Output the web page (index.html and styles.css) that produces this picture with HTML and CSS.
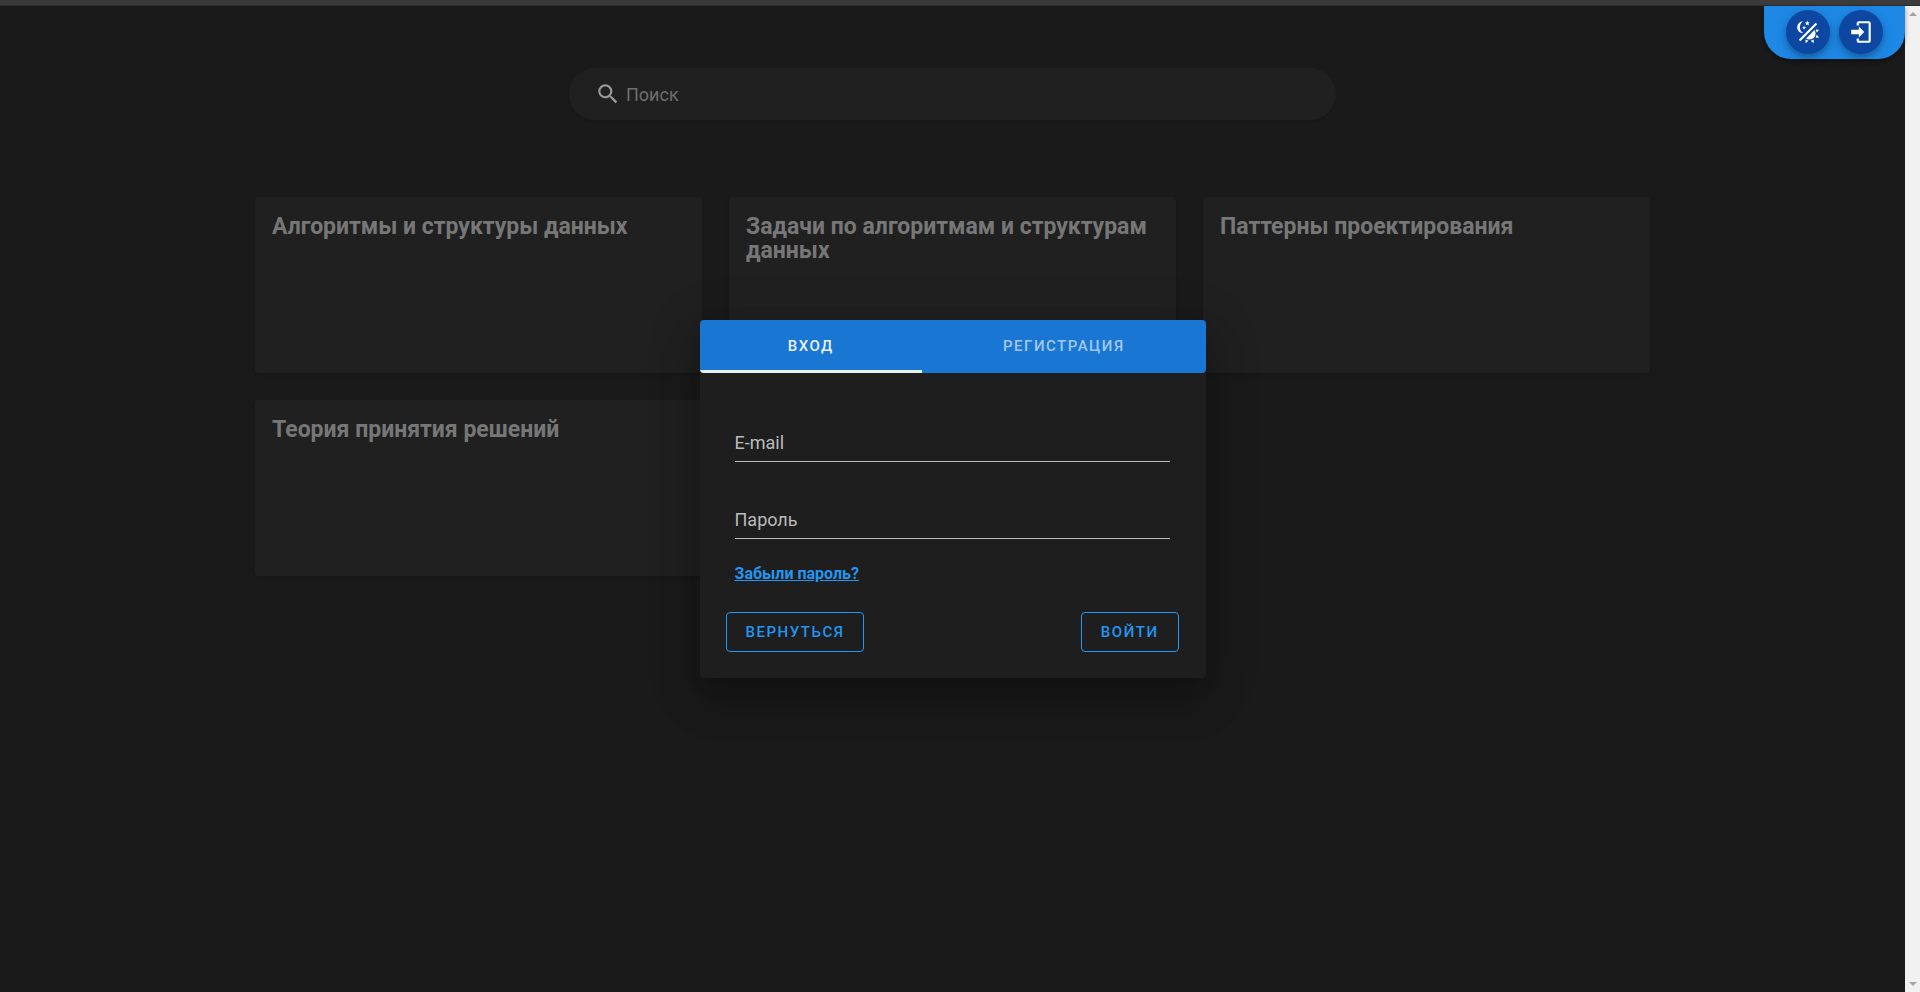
FILE: index.html
```html
<!DOCTYPE html>
<html lang="ru">
<head>
<meta charset="utf-8">
<title>Вход</title>
<link rel="stylesheet" href="styles.css">
</head>
<body>
<div class="window-edge"></div>
<div class="app">
  <main class="page">
    <form class="search" role="search">
      <svg class="search-icon" viewBox="0 0 24 24" aria-hidden="true"><path d="M9.5,3A6.5,6.5 0 0,1 16,9.5C16,11.11 15.41,12.59 14.44,13.73L14.71,14H15.5L20.5,19L19,20.5L14,15.5V14.71L13.73,14.44C12.59,15.41 11.11,16 9.5,16A6.5,6.5 0 0,1 3,9.5A6.5,6.5 0 0,1 9.5,3M9.5,5C7,5 5,7 5,9.5C5,12 7,14 9.5,14C12,14 14,12 14,9.5C14,7 12,5 9.5,5Z"/></svg>
      <input class="search-input" type="text" placeholder="Поиск" aria-label="Поиск">
    </form>
    <div class="cards">
      <article class="card"><h2 class="card-title">Алгоритмы и структуры данных</h2></article>
      <article class="card"><h2 class="card-title">Задачи по алгоритмам и структурам данных</h2></article>
      <article class="card"><h2 class="card-title">Паттерны проектирования</h2></article>
      <article class="card"><h2 class="card-title">Теория принятия решений</h2></article>
    </div>
  </main>
  <div class="scrollbar" aria-hidden="true">
    <span class="arrow arrow-up"></span>
    <span class="arrow arrow-down"></span>
  </div>
  <nav class="corner">
    <button class="round" type="button" aria-label="Сменить тему">
      <svg class="round-icon" viewBox="0 0 24 24" aria-hidden="true"><path d="M7.5,2C5.71,3.15 4.5,5.18 4.5,7.5C4.5,9.82 5.71,11.85 7.53,13C4.46,13 2,10.54 2,7.5A5.5,5.5 0 0,1 7.5,2M19.07,3.5L20.5,4.93L4.93,20.5L3.5,19.07L19.07,3.5M12.89,5.93L11.41,5L9.97,6L10.39,4.3L9,3.24L10.75,3.12L11.33,1.47L12,3.1L13.73,3.13L12.38,4.26L12.89,5.93M9.59,9.54L8.43,8.81L7.31,9.59L7.65,8.27L6.56,7.44L7.92,7.35L8.37,6.06L8.88,7.33L10.24,7.36L9.19,8.23L9.59,9.54M19,13.5A5.5,5.5 0 0,1 13.5,19C12.28,19 11.15,18.6 10.24,17.93L17.93,10.24C18.6,11.15 19,12.28 19,13.5M14.6,20.08L17.37,18.93L17.13,22.28L14.6,20.08M18.93,17.38L20.08,14.61L22.28,17.15L18.93,17.38M20.08,12.42L18.94,9.64L22.28,9.88L20.08,12.42M9.63,18.93L12.4,20.08L9.87,22.27L9.63,18.93Z"/></svg>
    </button>
    <button class="round" type="button" aria-label="Войти в аккаунт">
      <svg class="round-icon" viewBox="0 0 24 24" aria-hidden="true"><path d="M10,17V14H3V10H10V7L15,12L10,17M10,2H19A2,2 0 0,1 21,4V20A2,2 0 0,1 19,22H10A2,2 0 0,1 8,20V18H10V20H19V4H10V6H8V4A2,2 0 0,1 10,2Z"/></svg>
    </button>
  </nav>
  <div class="overlay">
    <section class="dialog" role="dialog" aria-label="Вход">
      <div class="tabs" role="tablist">
        <button class="tab tab-active" type="button" role="tab" aria-selected="true">Вход</button>
        <button class="tab" type="button" role="tab" aria-selected="false">Регистрация</button>
      </div>
      <form class="form">
        <div class="fields">
          <div class="field">
            <input class="field-input" id="email" type="email">
            <label class="field-label" for="email">E-mail</label>
          </div>
          <div class="field">
            <input class="field-input" id="password" type="password">
            <label class="field-label" for="password">Пароль</label>
          </div>
          <a class="forgot" href="#">Забыли пароль?</a>
        </div>
        <div class="actions">
          <button class="button" type="button">Вернуться</button>
          <button class="button" type="submit">Войти</button>
        </div>
      </form>
    </section>
  </div>
</div>
</body>
</html>
```
FILE: styles.css
```css
* {
  box-sizing: border-box;
}

body {
  margin: 0;
  min-height: 100vh;
  display: flex;
  flex-direction: column;
  background: #1a1a1a;
  color: #fff;
  font-family: Roboto, "Liberation Sans", sans-serif;
}

button,
input {
  font: inherit;
}

.window-edge {
  height: 6px;
  background: #3b3b3b;
  border-bottom: 1px solid #2c2c2c;
}

.app {
  flex: 1;
  display: flex;
  position: relative;
}

.page {
  flex: 1;
  display: flex;
  flex-direction: column;
  align-items: center;
  gap: 77px;
  padding: 62px 24px 24px;
}

.search {
  display: flex;
  align-items: center;
  gap: 5px;
  width: 100%;
  max-width: 767px;
  height: 52px;
  padding: 0 26px;
  border-radius: 26px;
  background: #202020;
  box-shadow: 0 2px 2px rgba(0, 0, 0, 0.08);
}

.search-icon {
  width: 26px;
  height: 26px;
  fill: #999;
}

.search-input {
  flex: 1;
  min-width: 0;
  padding: 0;
  border: 0;
  outline: 0;
  background: none;
  color: #999;
  font-size: 18px;
}

.search-input::placeholder {
  color: #6f6f6f;
}

.cards {
  display: grid;
  grid-template-columns: repeat(3, 1fr);
  gap: 27px;
  width: 100%;
  max-width: 1395px;
}

.card {
  min-height: 176px;
  padding: 18px 17px;
  border-radius: 4px;
  background: #202020;
  box-shadow: 0 2px 3px rgba(0, 0, 0, 0.12);
}

.card-title {
  margin: 0;
  color: #777;
  font-size: 23px;
  font-weight: 700;
  line-height: 24px;
}

.scrollbar {
  width: 15px;
  display: flex;
  flex-direction: column;
  justify-content: space-between;
  align-items: center;
  padding: 6px 0;
  background: #f1f1f1;
}

.arrow {
  border: 4px solid transparent;
}

.arrow-up {
  border-top: 0;
  border-bottom-color: #a3a3a3;
}

.arrow-down {
  border-bottom: 0;
  border-top-color: #a3a3a3;
}

.corner {
  position: absolute;
  top: 0;
  right: 15px;
  display: flex;
  gap: 9px;
  padding: 4px 22px 5px;
  border-radius: 0 0 27px 27px;
  background: #1e88e5;
  box-shadow: 0 2px 4px rgba(0, 0, 0, 0.4);
}

.round {
  display: grid;
  place-items: center;
  width: 44px;
  height: 44px;
  padding: 0;
  border: 0;
  border-radius: 50%;
  background: #0d47a1;
  box-shadow: 0 3px 5px rgba(0, 0, 0, 0.2), 0 4px 12px rgba(0, 0, 0, 0.16);
}

.round-icon {
  width: 26px;
  height: 26px;
  fill: #fff;
}

.overlay {
  position: absolute;
  inset: 0 15px 0 0;
  display: flex;
  align-items: center;
  justify-content: center;
  pointer-events: none;
}

.dialog {
  width: 506px;
  max-width: 100%;
  border-radius: 4px;
  background: #1e1e1e;
  box-shadow: 0 12px 17px -8px rgba(0, 0, 0, 0.2), 0 26px 42px 3px rgba(0, 0, 0, 0.14), 0 10px 50px 9px rgba(0, 0, 0, 0.12);
  pointer-events: auto;
}

.tabs {
  display: grid;
  grid-template-columns: 44fr 56fr;
  height: 53px;
  overflow: hidden;
  border-radius: 4px;
  background: #1976d2;
}

.tab {
  padding: 2px 18px 0;
  border: 0;
  border-bottom: 3px solid transparent;
  background: none;
  color: #a3c8ed;
  font-size: 15px;
  font-weight: 500;
  letter-spacing: 0.1em;
  text-transform: uppercase;
}

.tab-active {
  border-bottom-color: #e8f1fb;
  color: #e8f1fb;
}

.form {
  padding: 48px 27px 26px 26px;
}

.fields {
  display: flex;
  flex-direction: column;
  align-items: flex-start;
  gap: 36px;
  padding: 0 9px;
}

.field {
  position: relative;
  width: 100%;
  height: 41px;
}

.field-input {
  width: 100%;
  height: 100%;
  padding: 4px 0;
  border: 0;
  border-bottom: 1px solid #bbb;
  outline: 0;
  background: none;
  color: #fff;
  font-size: 18px;
}

.field-label {
  position: absolute;
  left: 0;
  top: 10px;
  color: #bbb;
  font-size: 18px;
  line-height: 24px;
  pointer-events: none;
}

.field-input:focus + .field-label {
  color: #2196f3;
}

.forgot {
  margin-top: -13px;
  color: #2196f3;
  font-size: 16px;
  font-weight: 700;
  line-height: 24px;
}

.actions {
  display: flex;
  justify-content: space-between;
  margin-top: 26px;
}

.button {
  height: 40px;
  padding: 0 19px;
  border: 1px solid #2196f3;
  border-radius: 4px;
  background: none;
  color: #2196f3;
  font-size: 15px;
  font-weight: 500;
  letter-spacing: 0.1em;
  text-transform: uppercase;
}
```
